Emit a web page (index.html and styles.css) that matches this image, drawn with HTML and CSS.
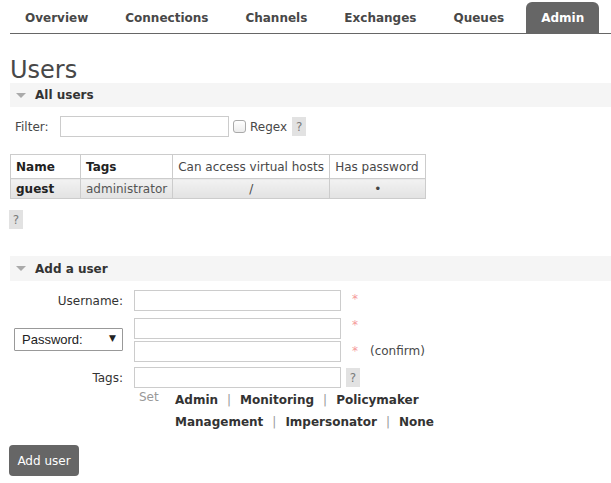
FILE: index.html
```html
<!DOCTYPE html>
<html>
<head>
<meta charset="utf-8">
<link rel="stylesheet" href="styles.css">
</head>
<body>
<ul class="nav">
  <li>Overview</li>
  <li>Connections</li>
  <li>Channels</li>
  <li>Exchanges</li>
  <li>Queues</li>
  <li class="active">Admin</li>
</ul>
<h1 class="title">Users</h1>

<div class="section">
  <div class="sec-head"><span class="tri"></span>All users</div>
  <div class="filter-row">
    <span class="filter-label">Filter:</span>
    <input class="text-input filter-input" type="text">
    <span class="check"></span>
    <span class="regex">Regex</span>
    <span class="help">?</span>
  </div>
  <table class="users">
    <thead>
      <tr>
        <th class="c-name b">Name</th>
        <th class="c-tags b">Tags</th>
        <th class="c-vh">Can access virtual hosts</th>
        <th class="c-pw">Has password</th>
      </tr>
    </thead>
    <tbody>
      <tr>
        <td class="b">guest</td>
        <td class="tagtxt">administrator</td>
        <td class="center">/</td>
        <td class="center dot">•</td>
      </tr>
    </tbody>
  </table>
  <span class="help help-below">?</span>
</div>

<div class="section section2">
  <div class="sec-head"><span class="tri"></span>Add a user</div>
  <div class="form">
    <div class="lbl">Username:</div>
    <input class="text-input field" type="text">
    <div class="req">*</div>

    <div class="lbl lbl-pw">
      <div class="select-wrap">
        <select class="pw-select"><option>Password:</option></select>
      </div>
    </div>
    <div class="pw-fields">
      <input class="text-input field" type="password">
      <input class="text-input field" type="password">
    </div>
    <div class="pw-req">
      <div class="req">*</div>
      <div class="req"><span>*</span><span class="confirm">(confirm)</span></div>
    </div>

    <div class="lbl">Tags:</div>
    <input class="text-input field" type="text">
    <div class="help-cell"><span class="help">?</span></div>

    <div class="set-row">
      <span class="set">Set</span>
      <div class="tag-links">
        <div class="tl-line"><span class="tl">Admin</span><span class="sep">|</span><span class="tl">Monitoring</span><span class="sep">|</span><span class="tl">Policymaker</span></div>
        <div class="tl-line"><span class="tl">Management</span><span class="sep">|</span><span class="tl">Impersonator</span><span class="sep">|</span><span class="tl">None</span></div>
      </div>
    </div>
  </div>
  <button class="btn" type="button">Add user</button>
</div>
</body>
</html>
```

FILE: styles.css
```css
* { box-sizing: border-box; }
body {
  margin: 0;
  font-family: "DejaVu Sans", Verdana, sans-serif;
  font-size: 12px;
  color: #484848;
  background: #fff;
}
.nav {
  list-style: none;
  margin: 2px 0 0 10px;
  padding: 0;
  display: flex;
  border-bottom: 1px solid #666;
  height: 32px;
}
.nav li {
  padding: 2px 15px 0;
  margin-right: 7px;
  font-weight: bold;
  line-height: 29px;
  color: #484848;
  white-space: nowrap;
}
.nav li.active {
  background: #666;
  color: #fff;
  border-radius: 6px 6px 0 0;
}
.title {
  margin: 23px 0 0 10px;
  font-size: 24px;
  line-height: 27px;
  font-weight: normal;
  color: #484848;
  height: 26px;
}
.section { margin-left: 10px; }
.section2 { margin-top: 27px; }
.sec-head {
  background: #f5f5f5;
  height: 24px;
  display: flex;
  align-items: center;
  font-weight: bold;
  color: #333;
  padding-left: 6px;
}
.section2 .sec-head { height: 25px; }
.tri {
  width: 0; height: 0;
  border-left: 5px solid transparent;
  border-right: 5px solid transparent;
  border-top: 5px solid #aaa;
  margin-right: 9px;
}
.filter-row {
  display: flex;
  align-items: center;
  margin-top: 9px;
  padding-left: 5px;
  height: 21px;
}
.filter-label { width: 45px; }
.text-input {
  border: 1px solid #ccc;
  height: 21px;
  padding: 0 3px;
  font: inherit;
  background: #fff;
  margin: 0;
  outline: none;
}
.filter-input { width: 169px; }
.check {
  width: 13px; height: 13px;
  border: 1px solid #aaa;
  border-radius: 3px;
  margin-left: 4px;
  background: linear-gradient(#fff, #ececec);
}
.regex { margin-left: 4px; }
.help {
  display: inline-flex;
  align-items: center;
  justify-content: center;
  width: 14px;
  height: 19px;
  background: #e2e2e2;
  color: #7a7a7a;
  font-size: 12px;
  margin-left: 5px;
}
.users {
  margin-top: 17px;
  border-collapse: collapse;
  border: 1px solid #ccc;
}
.users th, .users td {
  border: 1px solid #ccc;
  padding: 0 5px;
  white-space: nowrap;
  text-align: left;
}
.users th { height: 24px; font-weight: normal; }
.users td {
  height: 20px;
  background: linear-gradient(#f2f2f2, #e2e2e2);
}
.users .b { font-weight: bold; color: #222; }
.c-name { width: 70px; }
.c-tags { width: 92px; }
.c-vh { width: 157px; text-align: center; }
.c-pw { width: 96px; }
.users td.center { text-align: center; }
.tagtxt { color: #555; }
.dot { color: #444; }
.help-below { margin: 11px 0 0 -1px; }
.form {
  display: grid;
  grid-template-columns: 113px 207px auto;
  column-gap: 11px;
  row-gap: 6px;
  margin-top: 9px;
  align-items: center;
}
.lbl { text-align: right; color: #333; }
.lbl-pw { display: flex; justify-content: flex-end; }
.field { width: 207px; }
.pw-fields { display: flex; flex-direction: column; gap: 2px; margin-bottom: -1px; }
.req { color: #f59a9a; font-size: 12px; }
.pw-req {
  display: flex;
  flex-direction: column;
  gap: 2px;
  align-self: stretch;
}
.pw-req .req { height: 21px; display: flex; align-items: center; }
.confirm { color: #484848; margin-left: 12px; }
.form > .req { align-self: start; margin-top: 2px; }
.pw-req .req:first-child { align-items: flex-start; padding-top: 1px; }
.select-wrap {
  position: relative;
  width: 109px;
  height: 23px;
}
.pw-select {
  appearance: none;
  -webkit-appearance: none;
  width: 109px;
  height: 23px;
  border: 1px solid #999;
  border-radius: 1px;
  background: #fff;
  font-family: "Liberation Sans", Arial, sans-serif;
  font-size: 13px;
  color: #222;
  padding: 0 0 0 7px;
  margin: 0;
}
.select-wrap::after {
  content: "▼";
  position: absolute;
  right: 7px;
  top: 5px;
  font-size: 9px;
  color: #222;
  pointer-events: none;
}
.help-cell { margin-left: -6px; }
.help-cell .help { margin-left: 0; }
.set-row {
  display: flex;
  margin-top: -5px;
  grid-column: 2 / 4;
}
.set {
  color: #999;
  padding-left: 5px;
  width: 41px;
  line-height: 22px;
  margin-top: -3px;
}
.tag-links { line-height: 22px; }
.tl-line { white-space: nowrap; }
.tl { font-weight: bold; color: #333; }
.sep { color: #999; margin: 0 9px; }
.btn {
  display: block;
  margin: 12px 0 0 -1px;
  width: 70px;
  height: 31px;
  background: #666;
  color: #fff;
  border: none;
  border-radius: 4px;
  font-family: "DejaVu Sans", Verdana, sans-serif;
  font-size: 12px;
  padding: 0;
}
```
